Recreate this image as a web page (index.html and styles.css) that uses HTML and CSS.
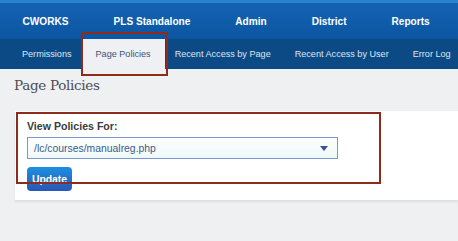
FILE: index.html
```html
<!DOCTYPE html>
<html>
<head>
<meta charset="utf-8">
<link rel="stylesheet" href="styles.css">
</head>
<body>
<header class="topnav">
  <a class="top-item">CWORKS</a>
  <a class="top-item">PLS Standalone</a>
  <a class="top-item">Admin</a>
  <a class="top-item">District</a>
  <a class="top-item">Reports</a>
</header>
<nav class="subnav">
  <a class="sub-item">Permissions</a>
  <a class="sub-item active">Page Policies<span class="mark mark-tab"></span></a>
  <a class="sub-item">Recent Access by Page</a>
  <a class="sub-item">Recent Access by User</a>
  <a class="sub-item">Error Log</a>
</nav>
<main class="content">
  <h1 class="title">Page Policies</h1>
  <section class="card">
    <div class="form">
      <span class="mark mark-form"></span>
      <label class="label">View Policies For:</label>
      <div class="select">
        <span class="select-text">/lc/courses/manualreg.php</span>
        <span class="caret"></span>
      </div>
      <button class="btn">Update</button>
    </div>
  </section>
</main>
</body>
</html>
```

FILE: styles.css
```css
html, body {
  margin: 0;
  padding: 0;
}
body {
  background: #eff0f2;
  font-family: "Liberation Sans", Arial, sans-serif;
  width: 458px;
  height: 241px;
  overflow: hidden;
}
.topnav {
  display: flex;
  height: 39px;
  box-sizing: border-box;
  border-top: 3px solid #2a84cc;
  background: linear-gradient(#1463b2, #0c56a2);
  align-items: center;
  overflow: hidden;
}
.top-item {
  flex-shrink: 0;
  white-space: nowrap;
  color: #ffffff;
  font-weight: bold;
  font-size: 10.1px;
  padding: 0 22.5px;
}
.subnav {
  display: flex;
  height: 30px;
  background: #0c4a86;
  align-items: stretch;
  padding-left: 10px;
}
.sub-item {
  flex-shrink: 0;
  white-space: nowrap;
  display: flex;
  align-items: center;
  color: #dfe7f1;
  font-size: 9.1px;
  padding: 0 12px;
  position: relative;
}
.sub-item.active {
  background: #eef0f3;
  color: #3e5375;
  padding: 0 14px;
  margin: 0 -2px;
}
.mark {
  position: absolute;
  border: 2px solid #8e2b1d;
  box-sizing: border-box;
  pointer-events: none;
}
.mark-tab {
  left: -1px;
  right: -3px;
  top: -7px;
  bottom: -7px;
}
.content {
  padding: 0 0 0 15px;
}
.title {
  margin: 0;
  padding: 8px 0 0 0;
  margin-left: -1px;
  height: 34px;
  box-sizing: border-box;
  font-family: "DejaVu Serif", serif;
  font-weight: normal;
  font-size: 13.5px;
  color: #4a4d52;
  letter-spacing: -0.3px;
}
.card {
  background: #ffffff;
  height: 89px;
  margin-top: 8px;
  box-shadow: 0 2px 2px rgba(0,0,0,0.08);
}
.form {
  position: relative;
  display: flex;
  flex-direction: column;
  align-items: flex-start;
  padding: 9px 0 0 12px;
}
.mark-form {
  left: 1px;
  top: 1px;
  width: 365px;
  height: 72px;
}
.label {
  font-weight: bold;
  font-size: 10.6px;
  color: #3a3c40;
  line-height: 13px;
}
.select {
  margin-top: 4px;
  width: 311px;
  height: 22px;
  box-sizing: border-box;
  border: 1px solid #7e96cf;
  background: linear-gradient(#ffffff, #eef8f8);
  display: flex;
  align-items: center;
  justify-content: space-between;
  padding: 0 9px 0 6px;
}
.select-text {
  font-size: 10.4px;
  color: #3b5b8e;
}
.caret {
  width: 0;
  height: 0;
  border-left: 4px solid transparent;
  border-right: 4px solid transparent;
  border-top: 5px solid #3d4f99;
}
.btn {
  margin-top: 8px;
  width: 45px;
  height: 24px;
  border: 0;
  border-radius: 4px;
  background: linear-gradient(#1b90e0, #2a55b6);
  color: #ffffff;
  font-family: "Liberation Sans", Arial, sans-serif;
  font-weight: bold;
  font-size: 10.4px;
  padding: 0;
}
```
